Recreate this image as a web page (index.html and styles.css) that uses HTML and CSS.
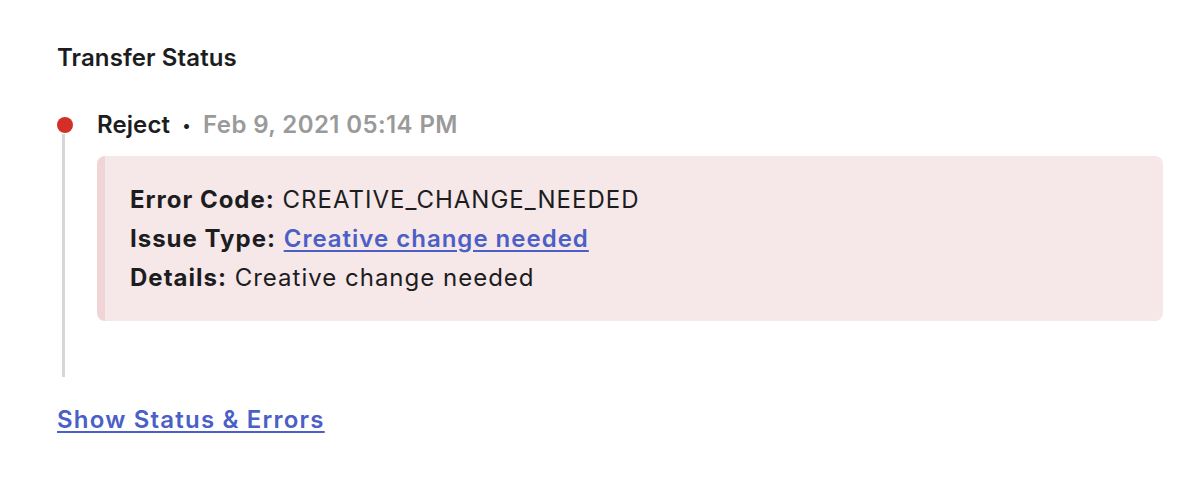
FILE: index.html
```html
<!DOCTYPE html>
<html lang="en">
<head>
  <meta charset="UTF-8" />
  <title>Transfer Status</title>
  <link rel="stylesheet" href="styles.css">
</head>
<body>
  <div class="status-panel">
    <div class="section-title">Transfer Status</div>

    <ul class="timeline">
      <li class="timeline-item">
        <div class="timeline-rail">
          <span class="timeline-dot"></span>
          <span class="timeline-line"></span>
        </div>
        <div class="timeline-body">
          <div class="timeline-head">
            <span class="status-name">Reject</span>
            <span class="status-sep">&bull;</span>
            <span class="status-date">Feb 9, 2021 05:14 PM</span>
          </div>
          <div class="error-box">
            <div class="error-row"><b>Error Code:</b> CREATIVE_CHANGE_NEEDED</div>
            <div class="error-row"><b>Issue Type:</b> <a href="#" class="link">Creative change needed</a></div>
            <div class="error-row"><b>Details:</b> Creative change needed</div>
          </div>
        </div>
      </li>
    </ul>

    <a href="#" class="link show-more">Show Status &amp; Errors</a>
  </div>
</body>
</html>
```

FILE: styles.css
```css
html, body {
  margin: 0;
  padding: 0;
  background: #fff;
  font-family: 'Inter', 'Noto Sans', Arial, sans-serif;
  color: #1d1d1f;
}
.status-panel {
  padding: 44px 23px 40px 57px;
}
.section-title {
  font-size: 24px;
  font-weight: 600;
  line-height: 28px;
  letter-spacing: 0.1px;
}
/* -- TIMELINE -- */
.timeline {
  list-style: none;
  margin: 37px 0 0 0;
  padding: 0;
}
.timeline-item {
  display: flex;
}
.timeline-rail {
  width: 40px;
  flex-shrink: 0;
  display: flex;
  flex-direction: column;
  align-items: flex-start;
}
.timeline-dot {
  width: 16px;
  height: 16px;
  border-radius: 50%;
  background: #d42f26;
  margin-top: 8px;
}
.timeline-line {
  width: 3px;
  margin-left: 5px;
  margin-top: 1px;
  flex: 1;
  background: #d6d6d6;
}
.timeline-body {
  flex: 1;
  padding-bottom: 56px;
}
.timeline-head {
  font-size: 24px;
  line-height: 32px;
  display: flex;
  align-items: center;
  gap: 12px;
}
.status-name {
  font-weight: 600;
  letter-spacing: 0.1px;
}
.status-sep {
  font-size: 16px;
}
.status-date {
  color: #9a9a9a;
  font-weight: 600;
  letter-spacing: 0.4px;
}
.error-box {
  margin-top: 15px;
  background: #f6e7e8;
  border-left: 8px solid #f0d4d6;
  border-radius: 8px;
  padding: 24px 25px;
  font-size: 24px;
  line-height: 39px;
  letter-spacing: 1px;
}
.error-row b {
  font-weight: 700;
}
.link {
  color: #4b5fc6;
  font-weight: 600;
  text-decoration: underline;
  text-underline-offset: 3px;
}
.show-more {
  display: inline-block;
  margin-top: 28px;
  font-size: 24px;
  line-height: 30px;
  letter-spacing: 1.2px;
}
```
